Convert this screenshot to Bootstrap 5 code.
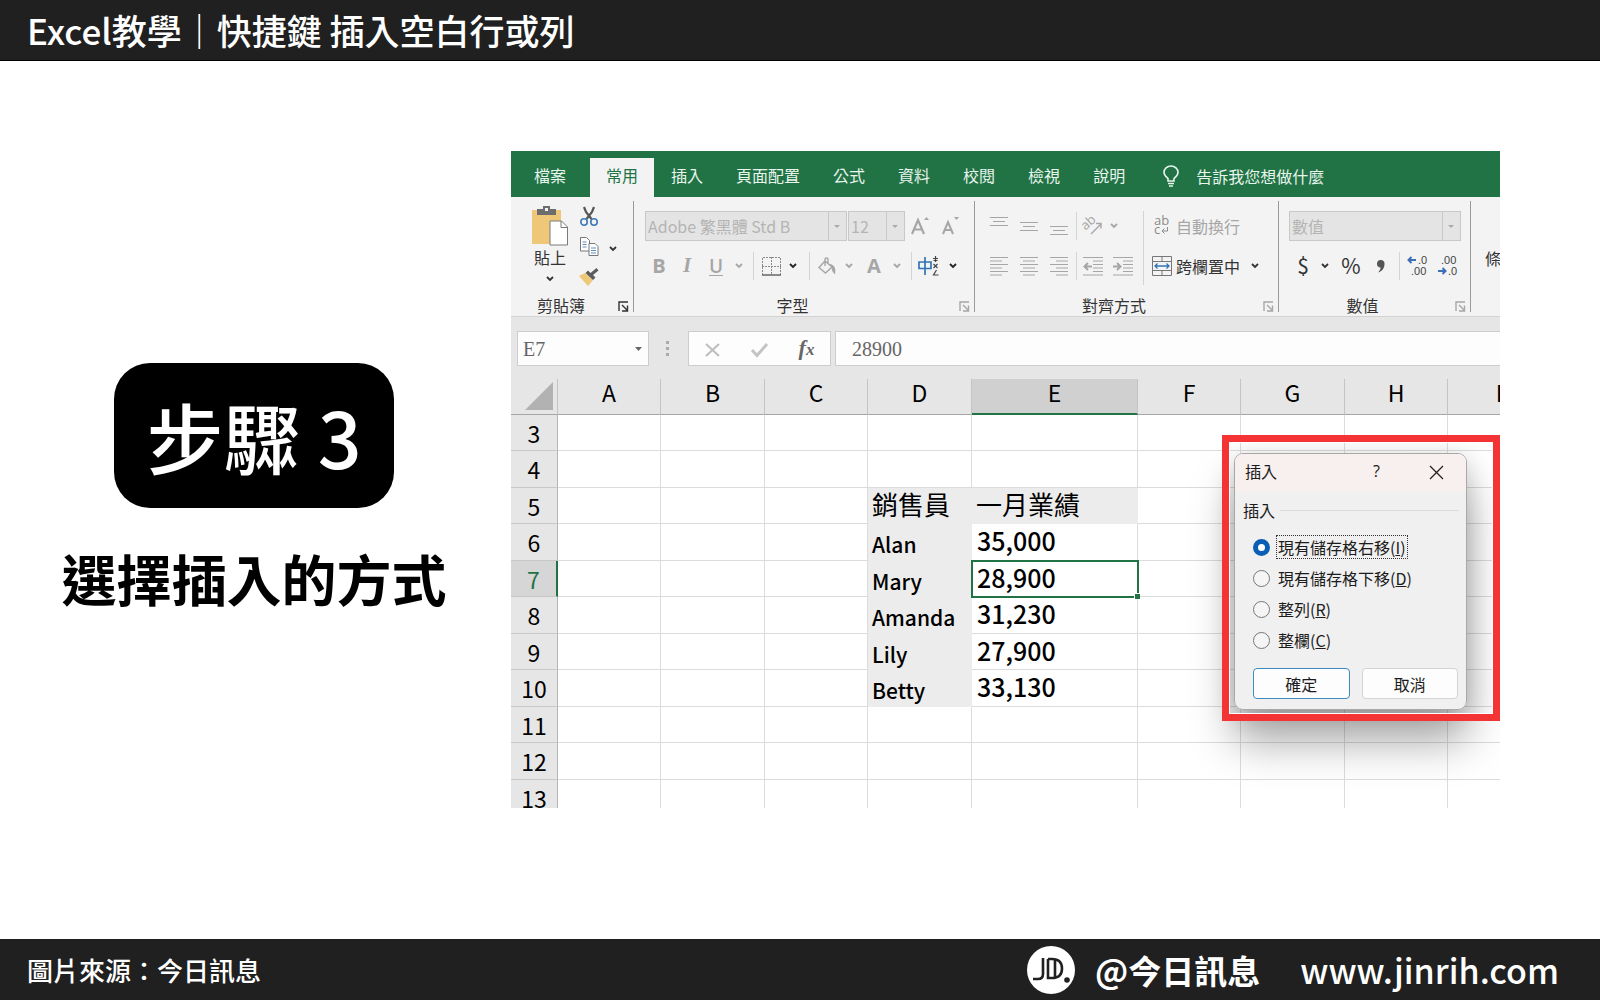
<!DOCTYPE html>
<html lang="zh-Hant">
<head>
<meta charset="utf-8">
<meta name="viewport" content="width=device-width, initial-scale=1">
<title>Excel教學｜快捷鍵 插入空白行或列</title>
<link rel="stylesheet" href="https://cdn.jsdelivr.net/npm/bootstrap@5.3.0/dist/css/bootstrap.min.css">
<style>
  body { font-family: "Noto Sans CJK TC", "Noto Sans", sans-serif; color: #000; background: #fff; }
  .bar-dark { background: #202020; color: #fff; }
  .bar-top { height: 61px; padding: 0 27px; border-bottom: 1px solid #000; }
  .bar-top h1 { font-size: 35px; line-height: 40px; font-weight: 500; }
  .bar-bottom { height: 61px; padding: 0 41px 0 27px; }
  .credit { font-size: 26px; line-height: 40px; font-weight: 500; }
  .handle { font-size: 33px; line-height: 40px; font-weight: 700; }
  .site { font-size: 34px; line-height: 40px; font-weight: 500; margin-left: 40px; }
  .bar-dark a { color: inherit; text-decoration: none; }

  .step-col { width: 511px; padding: 302px 3px 0 0; }
  .step-badge { background: #000; color: #fff; border-radius: 36px; padding: 33px 32px 32px; font-size: 77px; line-height: 80px; font-weight: 500; }
  .step-text { font-size: 55px; line-height: 64px; font-weight: 700; margin-top: 37px; }
  .shot-col { padding: 90px 100px 0 0; min-width: 0; }

  .excel { height: 657px; background: #e6e6e6; font-size: 16px; }
  .excel svg { overflow: visible; flex: none; }
  .excel button { background: none; border: 0; padding: 0; color: inherit; }
  .tabs { background: #217346; height: 46px; gap: 1px; }
  .tabs .nav-link { color: #e8f5ec; height: 39px; line-height: 34px; padding: 0 16px; white-space: nowrap; }
  .tabs .tab-file { padding: 0 23px; margin-right: 0; }
  .tabs .nav-link.active { background: #f3f3f3; color: #217346; }
  .tabs .tell { color: #e8f5ec; padding: 0 0 4px 21px; gap: 17px; height: 39px; }

  .ribbon { background: #f3f3f3; height: 120px; padding: 4px 0; border-bottom: 1px solid #d2d2d2; color: #333; overflow: hidden; }
  .grp { border-right: 1px solid #9a9a9a; padding-top: 10px; flex: none; }
  .grp-clip { width: 123px; padding-top: 5px; }
  .grp-font { width: 341px; padding-left: 11px; }
  .grp-align { width: 304px; padding-left: 9px; }
  .grp-num { width: 192px; padding-left: 10px; }
  .grp-last { border: 0; padding: 45px 0 0 14px; }
  .grp-name { line-height: 14px; text-align: center; position: relative; margin-top: auto; padding-right: 34px; }
  .grp-clip .grp-name { padding-right: 22px; }
  .launch { position: absolute; right: 4px; bottom: 0; line-height: 0; }
  .line-row { height: 30px; }
  .line-row + .line-row { margin-top: 10px; }
  .line-row > * { flex: none; display: flex; align-items: center; justify-content: center; height: 30px; }
  .w4 { width: 4px; } .w12 { width: 12px; } .w16 { width: 16px; } .w20 { width: 20px; } .w24 { width: 24px; }
  .w28 { width: 28px; } .w30 { width: 30px; } .w36 { width: 36px; }
  .rule-v { background: linear-gradient(#d4d4d4, #d4d4d4) center / 1px 28px no-repeat; }
  .rule-tall { width: 10px; height: 74px; background: linear-gradient(#d4d4d4, #d4d4d4) center / 1px 74px no-repeat; }
  .off, .excel button.off { color: #a6a6a6; }
  .pick { appearance: none; height: 30px; border: 1px solid #c8c8c8; border-radius: 0; background-color: #e4e4e4; color: #b4b4b4; opacity: 1; padding: 0 20px 0 2px; font-size: 16px; line-height: 24px;
    background-image: linear-gradient(#c8c8c8, #c8c8c8), url("data:image/svg+xml,%3Csvg xmlns='http://www.w3.org/2000/svg' viewBox='0 0 6 3'%3E%3Cpath d='M0 0h6L3 3z' fill='%23aaa'/%3E%3C/svg%3E");
    background-size: 1px 30px, 6px 3px; background-position: right 17px top 0, right 6px center; background-repeat: no-repeat; }
  .line-row .pick { display: block; }
  .pick-font { width: 202px; } .pick-size { width: 57px; margin-left: 1px; } .pick-num { width: 172px; }
  .clip-big { width: 54px; margin-left: 12px; }
  .clip-small { width: 20px; height: 80px; margin-left: 2px; }
  .clip-label { line-height: 22px; }
  .glyph-b { font-family: "Open Sans", sans-serif; font-weight: 700; font-size: 20px; }
  .glyph-i { font-family: "Liberation Serif", serif; font-style: italic; font-weight: 700; font-size: 21px; }
  .glyph-u { font-family: "Open Sans", sans-serif; font-weight: 600; font-size: 19px; text-decoration: underline; text-underline-offset: 2px; }
  .glyph-n { font-size: 21px; color: #555; }

  .fbar { height: 62px; padding: 14px 0 0 6px; }
  .fbox { background: #fdfdfd; border: 1px solid #cdcdcd; height: 35px; color: #666; }
  .fbox input { border: 0; background: none; color: inherit; font: 20px/32px "Liberation Serif", serif; outline: 0; min-width: 0; }
  .name-box { width: 132px; padding: 0 6px 0 5px; }
  .fx-box { width: 143px; }
  .fx { font: italic 700 22px/30px "Liberation Serif", serif; color: #555; }
  .fx span { font-size: 17px; }

  .sheet-wrap { height: 429px; overflow: hidden; }
  .sheet { table-layout: fixed; width: 1040px; border-collapse: separate; border-spacing: 0; line-height: 26px; }
  .sheet th, .sheet td { padding: 0; overflow: hidden; white-space: nowrap; }
  .sheet th { font-size: 23px; font-weight: 400; text-align: center; background: #e6e6e6; }
  .sheet thead th { height: 36px; border-bottom: 1px solid #a6a6a6; border-right: 1px solid #c4c4c4; padding-bottom: 9px; }
  .sheet thead th.sel { background: #d0d0d0; border-bottom: 2px solid #217346; padding-bottom: 8px; }
  .sheet tbody tr { height: 36px; }
  .sheet tbody tr:nth-child(even) { height: 37px; }
  .sheet tbody th { border-right: 1px solid #b4b4b4; border-bottom: 1px solid #c8c8c8; }
  .sheet tbody th.sel { background: #d6d6d6; color: #217346; border-right: 2px solid #217346; }
  .sheet td { background: #fff; border-right: 1px solid #dcdcdc; border-bottom: 1px solid #dcdcdc; }
  .sheet td.hd { background: #ececec; border-color: #ececec; font-size: 26px; padding: 0 0 4px 4px; }
  .sheet td.nm { background: #ececec; border-color: #ececec; font-size: 21px; font-weight: 500; padding: 4px 0 0 4px; }
  .sheet td.val { font-size: 25px; font-weight: 500; padding: 0 0 4px 5px; }
  .sheet td.cur { outline: 2px solid #217346; outline-offset: -1px; position: relative; overflow: visible; }
  .cur::after { content: ""; position: absolute; right: -3px; bottom: -3px; width: 6px; height: 6px; background: #217346; border: 1px solid #fff; border-width: 1px 0 0 1px; }

  .red-frame { position: absolute; right: 0; top: 284px; border: 7px solid #f43434; padding: 11px 26px 4px 5px; box-shadow: inset 0 0 0 1px #fff; }
  .shade { position: absolute; right: 33px; top: 302px; width: 233px; height: 257px; border-radius: 9px; box-shadow: 0 32px 44px rgba(0,0,0,.34), 0 4px 24px rgba(0,0,0,.16); }
  .dlg { width: 233px; height: 257px; border-radius: 9px; border: 1px solid #a8a8a8; background: #f0f0f0; color: #1c1c1c; overflow: hidden; }
  .dlg-title { background: #f8efef; height: 38px; padding: 0 22px 4px 10px; }
  .dlg-title .q { margin-left: auto; margin-right: 49px; font-family: "Open Sans", sans-serif; }
  .dlg fieldset { padding: 8px 7px 0 8px; }
  .dlg legend { font-size: 16px; line-height: 22px; gap: 5px; margin: 0; padding-top: 7px; float: none; }
  .dlg legend::after { content: ""; flex: 1; height: 1px; background: #dcdcdc; }
  .opts { padding: 5px 0 0 10px; gap: 5px; }
  .opt { height: 26px; gap: 6px; }
  .opt .form-check-input { width: 17px; height: 17px; margin: 0; float: none; border: 1px solid #777; background-color: #f5f5f5; box-shadow: none; flex: none; }
  .opt .form-check-input:checked { background: #fff; border: 5px solid #0a5fb4; }
  .opt label { line-height: 22px; padding: 0 1px; border: 1px solid transparent; white-space: nowrap; }
  .opt input:checked + label { border: 1px dotted #333; }
  .dlg-btns { padding: 15px 8px 0 18px; gap: 12px; }
  .dlg-btns .btn { flex: 1; height: 31px; background: #fdfdfd; border: 1px solid #d4d4d4; border-radius: 4px; font-size: 16px; line-height: 20px; color: #1c1c1c; }
  .dlg-btns .btn-ok { border-color: #3f8ac0; }
</style>
</head>
<body class="d-flex flex-column min-vh-100">

<svg class="d-none">
  <symbol id="chev" viewBox="0 0 8 6"><path d="M1 1l3 3 3-3" fill="none" stroke="currentColor" stroke-width="1.8"/></symbol>
  <symbol id="launcher" viewBox="0 0 11 11"><path d="M1 10V1h9M4 4l5 5M9.500 4.500v5.500h-5.500" fill="none" stroke="currentColor" stroke-width="1.400"/></symbol>
</svg>

<header class="bar-dark bar-top d-flex align-items-center">
  <h1 class="m-0">Excel教學｜快捷鍵 插入空白行或列</h1>
</header>

<main class="d-flex flex-grow-1">
  <section class="step-col d-flex flex-column align-items-center flex-shrink-0">
    <div class="step-badge">步驟 3</div>
    <p class="step-text mb-0 text-nowrap">選擇插入的方式</p>
  </section>

  <section class="shot-col flex-grow-1">
    <div class="excel position-relative overflow-hidden">
      <nav class="tabs nav flex-nowrap align-items-end">
        <a class="nav-link tab-file" href="#">檔案</a>
        <a class="nav-link active" href="#">常用</a>
        <a class="nav-link" href="#">插入</a>
        <a class="nav-link" href="#">頁面配置</a>
        <a class="nav-link" href="#">公式</a>
        <a class="nav-link" href="#">資料</a>
        <a class="nav-link" href="#">校閱</a>
        <a class="nav-link" href="#">檢視</a>
        <a class="nav-link" href="#">說明</a>
        <button class="tell d-flex align-items-center text-nowrap" type="button">
          <svg width="16" height="22" viewBox="0 0 16 22" fill="none" stroke="currentColor" stroke-width="1.600"><path d="M5 16v-2.500C3 11.500 1 10 1 7.500a7 6.500 0 0 1 14 0c0 2.500-2 4-4 6V16zM5 18.500h6M6 21h4"/></svg>
          告訴我您想做什麼
        </button>
      </nav>

      <div class="ribbon d-flex">
        <div class="grp grp-clip d-flex flex-column">
          <div class="d-flex">
            <button class="clip-big d-flex flex-column align-items-center" type="button">
              <svg width="38" height="40" viewBox="0 0 38 40"><path d="M1 4h29v34H1z" fill="#eec779"/><path d="M6 3h6V0h7v3h6v6H6z" fill="#6d6d6d"/><path d="M14 2h3v3h-3z" fill="#f3f3f3"/><path d="M19 15h11.500l6 6v18H19z" fill="#fff" stroke="#7a7a7a"/><path d="M30 15v6.500h6.500" fill="none" stroke="#7a7a7a"/></svg>
              <span class="clip-label">貼上</span>
              <svg class="mt-2" width="8" height="6"><use href="#chev"/></svg>
            </button>
            <div class="clip-small d-flex flex-column justify-content-between align-items-center">
              <button class="lh-1" type="button" aria-label="剪下"><svg width="18" height="19" viewBox="0 0 18 19" fill="none"><path d="M4 0l2 5 5.500 7M14 0l-2 5-5.500 7" stroke="#555" stroke-width="2.200"/><circle cx="4" cy="15" r="3.200" stroke="#3d7ab8" stroke-width="1.600"/><circle cx="14" cy="15" r="3.200" stroke="#3d7ab8" stroke-width="1.600"/></svg></button>
              <button class="lh-1" type="button" aria-label="複製"><svg width="19" height="20" viewBox="0 0 19 20" fill="#fff" stroke="#777"><path d="M.5.5h6l3 3V14h-9z"/><path d="M2.500 5h4M2.500 7.500h4M2.500 10h4" stroke="#5f8fbc"/><path d="M9 6.500h6l3 3v9H9z"/><path d="M11 11h5M11 13.500h5M11 16h5" stroke="#5f8fbc"/></svg></button>
              <button class="lh-1" type="button" aria-label="複製格式"><svg width="20" height="18" viewBox="0 0 20 18"><path d="M0 8l6-3 8 7-5 6z" fill="#eec779"/><path d="M6.500 5l7.500 7 2.500-2.500-2.500-2.500L19.500 2.500 17.500 0l-6 5-2.500-2.500z" fill="#5c5c5c"/></svg></button>
            </div>
            <button class="w28" type="button" aria-label="複製選項"><svg width="8" height="6"><use href="#chev"/></svg></button>
          </div>
          <div class="grp-name">剪貼簿<button class="launch" type="button" aria-label="剪貼簿設定"><svg width="11" height="11"><use href="#launcher"/></svg></button></div>
        </div>

        <div class="grp grp-font d-flex flex-column">
          <div class="line-row d-flex">
            <select class="pick pick-font" aria-label="字型" disabled><option>Adobe 繁黑體 Std B</option></select>
            <select class="pick pick-size" aria-label="字型大小" disabled><option>12</option></select>
            <button class="w30 off" type="button" aria-label="放大字型"><svg width="18" height="20" viewBox="0 0 18 20"><path d="M1 18L7 4l6 14M3.500 13.500h7" fill="none" stroke="currentColor" stroke-width="2.200"/><path d="M13 4l2.500-3L18 4z" fill="currentColor"/></svg></button>
            <button class="w30 off" type="button" aria-label="縮小字型"><svg width="18" height="20" viewBox="0 0 18 20"><path d="M2 18L7 6l5 12M4 14h6" fill="none" stroke="currentColor" stroke-width="2"/><path d="M13 1h5l-2.500 3z" fill="currentColor"/></svg></button>
          </div>
          <div class="line-row d-flex off">
            <button class="w28 glyph-b" type="button">B</button>
            <button class="w28 glyph-i" type="button">I</button>
            <button class="w30 glyph-u" type="button">U</button>
            <button class="w16" type="button" aria-label="底線選項"><svg width="8" height="6"><use href="#chev"/></svg></button>
            <span class="w12 rule-v"></span>
            <button class="w24" type="button" aria-label="框線"><svg width="19" height="19" viewBox="0 0 19 19" fill="none" stroke="#8a8a8a"><path d="M.5 18V.5h18V18M9.500 0v18M0 9.500h19" stroke-dasharray="2 1"/><path d="M0 18h19" stroke="#666" stroke-width="1.500"/></svg></button>
            <button class="w20 text-dark" type="button" aria-label="框線選項"><svg width="8" height="6"><use href="#chev"/></svg></button>
            <span class="w12 rule-v"></span>
            <button class="w24" type="button" aria-label="填滿色彩"><svg width="18" height="19" viewBox="0 0 18 19" fill="none" stroke="currentColor" stroke-width="1.400"><path d="M7 4l7 6-6.500 6L1 10.500zM7 9V2.500a1.500 1.500 0 0 1 3 0V7"/><path d="M13 8c3 1 4 4 3.500 8-1.500-1-2-3-2.500-6z" fill="currentColor"/></svg></button>
            <button class="w20" type="button" aria-label="填滿選項"><svg width="8" height="6"><use href="#chev"/></svg></button>
            <button class="w30 glyph-b" type="button">A</button>
            <button class="w16" type="button" aria-label="字型色彩選項"><svg width="8" height="6"><use href="#chev"/></svg></button>
            <span class="w12 rule-v"></span>
            <button class="w24" type="button" aria-label="注音標示"><svg width="22" height="20" viewBox="0 0 22 20" fill="none"><path d="M1 6h12v6.500H1zM7 1v18" stroke="#2f75b5" stroke-width="1.700"/><path d="M15 2.500h5M15.500 4.500h4M17.500 0v6M15.500 8l4 4M19.500 8l-4 4M18.500 14l-3 5h5" stroke="#444" stroke-width="1.200"/></svg></button>
            <button class="w24 text-dark" type="button" aria-label="注音選項"><svg width="8" height="6"><use href="#chev"/></svg></button>
          </div>
          <div class="grp-name">字型<button class="launch off" type="button" aria-label="字型設定"><svg width="11" height="11"><use href="#launcher"/></svg></button></div>
        </div>

        <div class="grp grp-align d-flex flex-column">
          <div class="d-flex">
            <div>
              <div class="line-row d-flex off">
                <button class="w30" type="button" aria-label="靠上對齊"><svg width="18" height="18" viewBox="0 0 18 18" stroke="currentColor"><path d="M0 .5h18M3 4.500h12M0 8.500h18"/></svg></button>
                <button class="w30" type="button" aria-label="置中對齊"><svg width="18" height="18" viewBox="0 0 18 18" stroke="currentColor"><path d="M0 5.500h18M3 9.500h12M0 13.500h18"/></svg></button>
                <button class="w30" type="button" aria-label="靠下對齊"><svg width="18" height="18" viewBox="0 0 18 18" stroke="currentColor"><path d="M0 9.500h18M3 13.500h12M0 17.500h18"/></svg></button>
                <span class="w4 rule-v"></span>
                <button class="w30" type="button" aria-label="方向"><svg width="20" height="20" viewBox="0 0 20 20"><text x="-1" y="10" transform="rotate(-42 7 8)" font-size="13" font-family="Open Sans" fill="currentColor">ab</text><path d="M8 18L18 8M13 7.500h5v5" fill="none" stroke="currentColor" stroke-width="1.400"/></svg></button>
                <button class="w12" type="button" aria-label="方向選項"><svg width="8" height="6"><use href="#chev"/></svg></button>
              </div>
              <div class="line-row d-flex off">
                <button class="w30" type="button" aria-label="靠左"><svg width="18" height="19" viewBox="0 0 18 19" stroke="currentColor"><path d="M0 .5h18M0 4h12M0 7.500h18M0 11h12M0 14.500h18M0 18h12"/></svg></button>
                <button class="w30" type="button" aria-label="置中"><svg width="18" height="19" viewBox="0 0 18 19" stroke="currentColor"><path d="M0 .5h18M3 4h12M0 7.500h18M3 11h12M0 14.500h18M3 18h12"/></svg></button>
                <button class="w30" type="button" aria-label="靠右"><svg width="18" height="19" viewBox="0 0 18 19" stroke="currentColor"><path d="M0 .5h18M6 4h12M0 7.500h18M6 11h12M0 14.500h18M6 18h12"/></svg></button>
                <span class="w4 rule-v"></span>
                <button class="w30" type="button" aria-label="減少縮排"><svg width="20" height="19" viewBox="0 0 20 19" stroke="currentColor" fill="none"><path d="M0 .5h20M10 4h10M10 7.500h10M10 11h10M10 14.500h10M0 18h20"/><path d="M9 9.500H2M5 6L1.500 9.500 5 13" stroke-width="2"/></svg></button>
                <button class="w30" type="button" aria-label="增加縮排"><svg width="20" height="19" viewBox="0 0 20 19" stroke="currentColor" fill="none"><path d="M0 .5h20M10 4h10M10 7.500h10M10 11h10M10 14.500h10M0 18h20"/><path d="M0 9.500h7M4 6l3.500 3.500L4 13" stroke-width="2"/></svg></button>
              </div>
            </div>
            <span class="rule-tall"></span>
            <div>
              <button class="line-row d-flex off" type="button"><span class="w28"><svg width="18" height="20" viewBox="0 0 18 20"><g font-family="Open Sans" font-size="13" fill="#8c8c8c"><text x="1" y="9">ab</text><text x="1" y="18">c</text></g><path d="M14.500 11v4H9M11.500 12.500L9 15l2.500 2.500" fill="none" stroke="#8c8c8c"/></svg></span><span>自動換行</span></button>
              <div class="line-row d-flex">
                <button type="button"><span class="w28 d-flex justify-content-center"><svg width="20" height="20" viewBox="0 0 20 20" fill="none" stroke="#777"><path d="M.5.5h19v19H.5zM0 5.500h20M0 14.500h20M10 0v5M10 15v5"/><path d="M3 10h14M5.500 7.500L3 10l2.500 2.500M14.500 7.500L17 10l-2.500 2.500" stroke="#2f75b5" stroke-width="1.300"/></svg></span><span>跨欄置中</span></button>
                <button class="w30" type="button" aria-label="跨欄選項"><svg width="8" height="6"><use href="#chev"/></svg></button>
              </div>
            </div>
          </div>
          <div class="grp-name">對齊方式<button class="launch off" type="button" aria-label="對齊設定"><svg width="11" height="11"><use href="#launcher"/></svg></button></div>
        </div>

        <div class="grp grp-num d-flex flex-column">
          <div class="line-row d-flex"><select class="pick pick-num" aria-label="數值格式" disabled><option>數值</option></select></div>
          <div class="line-row d-flex">
            <button class="w28 glyph-n" type="button">$</button>
            <button class="w16" type="button" aria-label="會計格式選項"><svg width="8" height="6"><use href="#chev"/></svg></button>
            <button class="w36 glyph-n" type="button">%</button>
            <button class="w24" type="button" aria-label="千分位樣式"><svg width="8" height="13" viewBox="0 0 8 13"><path d="M4 0a3.500 3.500 0 0 1 3.500 4C7.500 8 5 11.500 1 12.500c2-2 2.500-3.500 2.500-5A3.500 3.500 0 0 1 4 0z" fill="#555"/></svg></button>
            <span class="w12 rule-v"></span>
            <button class="w24" type="button" aria-label="增加小數位數"><svg width="20" height="20" viewBox="0 0 20 20"><g font-family="Liberation Sans" font-size="11" fill="#444"><text x="11" y="8">.0</text><text x="4" y="19">.00</text></g><path d="M9 4H2M4.500 1L1.500 4l3 3" fill="none" stroke="#3d6fb4" stroke-width="2"/></svg></button>
            <button class="w36" type="button" aria-label="減少小數位數"><svg width="20" height="20" viewBox="0 0 20 20"><g font-family="Liberation Sans" font-size="11" fill="#444"><text x="4" y="8">.00</text><text x="11" y="19">.0</text></g><path d="M1 15h7M5.500 12l3 3-3 3" fill="none" stroke="#3d6fb4" stroke-width="2"/></svg></button>
          </div>
          <div class="grp-name">數值<button class="launch off" type="button" aria-label="數值設定"><svg width="11" height="11"><use href="#launcher"/></svg></button></div>
        </div>
        <div class="grp grp-last text-nowrap">條件</div>
      </div>

      <div class="fbar d-flex">
        <div class="fbox name-box d-flex align-items-center"><input class="flex-fill w-100 p-0" type="text" value="E7" aria-label="名稱方塊"><svg width="7" height="4"><path d="M0 0h7L3.500 4z" fill="#666"/></svg></div>
        <svg width="39" height="35" fill="#aaa"><path d="M17 10h3v3h-3zM17 16h3v3h-3zM17 22h3v3h-3z"/></svg>
        <div class="fbox fx-box d-flex">
          <button class="flex-fill w-100" type="button" aria-label="取消輸入"><svg width="15" height="14" viewBox="0 0 15 14"><path d="M1 0l13 12M14 0L1 12" stroke="#bdbdbd" stroke-width="2"/></svg></button>
          <button class="flex-fill w-100" type="button" aria-label="輸入"><svg width="17" height="14" viewBox="0 0 17 14"><path d="M1 6l5 5.500L16 0" fill="none" stroke="#c4c4c4" stroke-width="3"/></svg></button>
          <button class="flex-fill w-100 fx" type="button">f<span>x</span></button>
        </div>
        <div class="fbox flex-fill ms-1 d-flex border-end-0"><input class="w-100 ps-3 pe-0 py-0" type="text" value="28900" aria-label="資料編輯列"></div>
      </div>

      <div class="sheet-wrap">
        <table class="sheet">
          <colgroup><col style="width:47px"><col style="width:103px"><col style="width:104px"><col style="width:103px"><col style="width:104px"><col style="width:166px"><col style="width:103px"><col style="width:104px"><col style="width:103px"><col></colgroup>
          <thead>
            <tr><th class="align-bottom text-end p-0"><svg class="d-block ms-auto me-1 mb-1" width="28" height="28"><path d="M28 0v28H0z" fill="#b2b2b2"/></svg></th><th>A</th><th>B</th><th>C</th><th>D</th><th class="sel">E</th><th>F</th><th>G</th><th>H</th><th>I</th></tr>
          </thead>
          <tbody>
            <tr><th>3</th><td></td><td></td><td></td><td></td><td></td><td></td><td></td><td></td><td></td></tr>
            <tr><th>4</th><td></td><td></td><td></td><td></td><td></td><td></td><td></td><td></td><td></td></tr>
            <tr><th>5</th><td></td><td></td><td></td><td class="hd">銷售員</td><td class="hd">一月業績</td><td></td><td></td><td></td><td></td></tr>
            <tr><th>6</th><td></td><td></td><td></td><td class="nm">Alan</td><td class="val">35,000</td><td></td><td></td><td></td><td></td></tr>
            <tr><th class="sel">7</th><td></td><td></td><td></td><td class="nm">Mary</td><td class="val cur">28,900</td><td></td><td></td><td></td><td></td></tr>
            <tr><th>8</th><td></td><td></td><td></td><td class="nm">Amanda</td><td class="val">31,230</td><td></td><td></td><td></td><td></td></tr>
            <tr><th>9</th><td></td><td></td><td></td><td class="nm">Lily</td><td class="val">27,900</td><td></td><td></td><td></td><td></td></tr>
            <tr><th>10</th><td></td><td></td><td></td><td class="nm">Betty</td><td class="val">33,130</td><td></td><td></td><td></td><td></td></tr>
            <tr><th>11</th><td></td><td></td><td></td><td></td><td></td><td></td><td></td><td></td><td></td></tr>
            <tr><th>12</th><td></td><td></td><td></td><td></td><td></td><td></td><td></td><td></td><td></td></tr>
            <tr><th>13</th><td></td><td></td><td></td><td></td><td></td><td></td><td></td><td></td><td></td></tr>
          </tbody>
        </table>
      </div>

      <div class="shade"></div>
      <div class="red-frame">
        <form class="dlg" onsubmit="return false">
          <div class="dlg-title d-flex align-items-center">
            <span>插入</span>
            <button class="q" type="button">?</button>
            <button class="lh-1" type="button" aria-label="關閉"><svg width="15" height="15" viewBox="0 0 15 15"><path d="M1 1l13 13M14 1L1 14" stroke="#222" stroke-width="1.300"/></svg></button>
          </div>
          <fieldset>
            <legend class="d-flex align-items-center">插入</legend>
            <div class="opts d-flex flex-column">
              <div class="opt d-flex align-items-center"><input class="form-check-input" type="radio" name="ins" id="o1" checked><label for="o1">現有儲存格右移(<u>I</u>)</label></div>
              <div class="opt d-flex align-items-center"><input class="form-check-input" type="radio" name="ins" id="o2"><label for="o2">現有儲存格下移(<u>D</u>)</label></div>
              <div class="opt d-flex align-items-center"><input class="form-check-input" type="radio" name="ins" id="o3"><label for="o3">整列(<u>R</u>)</label></div>
              <div class="opt d-flex align-items-center"><input class="form-check-input" type="radio" name="ins" id="o4"><label for="o4">整欄(<u>C</u>)</label></div>
            </div>
          </fieldset>
          <div class="dlg-btns d-flex">
            <button class="btn btn-ok p-0" type="submit">確定</button>
            <button class="btn p-0" type="button">取消</button>
          </div>
        </form>
      </div>
    </div>
  </section>
</main>

<footer class="bar-dark bar-bottom d-flex align-items-center">
  <span class="credit me-auto">圖片來源：今日訊息</span>
  <svg width="48" height="48" viewBox="0 0 48 48" role="img" aria-label="JD."><circle cx="24" cy="24" r="24" fill="#fff"/><path d="M16 12v16q0 5-5 5H6M21 13v19h4q10 0 10-9.500T25 13h-4M28 14v18" fill="none" stroke="#202020" stroke-width="2.600"/><circle cx="40" cy="34" r="2.800" fill="#202020"/></svg>
  <span class="handle ms-3 ps-1">@今日訊息</span>
  <a class="site" href="#">www.jinrih.com</a>
</footer>

<script src="https://cdn.jsdelivr.net/npm/bootstrap@5.3.0/dist/js/bootstrap.bundle.min.js"></script>
</body>
</html>
